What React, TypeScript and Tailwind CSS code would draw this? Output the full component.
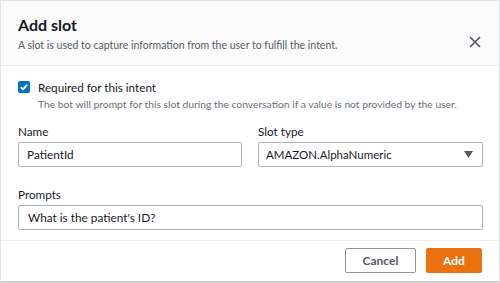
import React, { useState } from "react";

export default function App() {
  const [required, setRequired] = useState(true);
  const [name, setName] = useState("PatientId");
  const [prompt, setPrompt] = useState("What is the patient's ID?");

  return (
    <div
      className="w-[500px] h-[283px] bg-white"
      style={{ fontFamily: 'Lato, "Noto Sans", sans-serif' }}
    >
      <div className="flex flex-col h-[282px] border border-[#e1e4e4] border-b-[#c8cbcc] shadow-[0_1px_1px_rgba(0,0,0,0.15)]">
        {/* header */}
        <div className="flex justify-between bg-[#fbfbfb] border-b border-[#eaeded] h-[65px] pl-[17px] pr-[18px] pt-[13px]">
          <div className="flex flex-col">
            <h2 className="text-[16px] font-bold leading-[22px] text-[#16191f]">Add slot</h2>
            <p className="text-[10.5px] leading-[16px] text-[#545b64] mt-[1px] whitespace-nowrap">
              A slot is used to capture information from the user to fulfill the intent.
            </p>
          </div>
          <button className="mt-[5px] text-[#545b64]">
            <svg width="12" height="12" viewBox="0 0 12 12">
              <path d="M1 1 L11 11 M11 1 L1 11" stroke="#545b64" strokeWidth="1.7" />
            </svg>
          </button>
        </div>

        {/* body */}
        <div className="flex flex-col flex-1 px-[17px] pt-[13px]">
          <label className="flex gap-[8px] cursor-pointer">
            <span
              onClick={() => setRequired(!required)}
              className={`mt-[2px] w-[12px] h-[12px] rounded-[2px] flex items-center justify-center ${
                required ? "bg-[#0073bb]" : "border border-[#aab7b8] bg-white"
              }`}
            >
              {required && (
                <svg width="10" height="10" viewBox="0 0 10 10">
                  <path d="M1.8 5.2 L4 7.4 L8.3 2.6" stroke="white" strokeWidth="1.8" fill="none" />
                </svg>
              )}
            </span>
            <div className="flex flex-col">
              <span className="text-[11.7px] leading-[16px] text-[#16191f]">Required for this intent</span>
              <span className="text-[10.3px] leading-[16px] text-[#687078] mt-[1px] whitespace-nowrap">
                The bot will prompt for this slot during the conversation if a value is not provided by the user.
              </span>
            </div>
          </label>

          <div className="grid grid-cols-2 gap-x-[16px] mt-[11px]">
            <div className="flex flex-col">
              <span className="text-[11.7px] leading-[16px] text-[#16191f]">Name</span>
              <input
                value={name}
                onChange={(e) => setName(e.target.value)}
                className="mt-[3px] h-[25px] w-[224px] border border-[#aab7b8] rounded-[2px] px-[8px] text-[11.8px] text-[#16191f] outline-none"
              />
            </div>
            <div className="flex flex-col">
              <span className="text-[11.7px] leading-[16px] text-[#16191f]">Slot type</span>
              <div className="mt-[3px] h-[25px] w-[225px] border border-[#aab7b8] rounded-[2px] pl-[7px] pr-[9px] flex items-center justify-between">
                <span className="text-[11.5px] text-[#16191f]">AMAZON.AlphaNumeric</span>
                <svg width="9" height="7" viewBox="0 0 9 7">
                  <path d="M0 0 H9 L4.5 7 Z" fill="#545b64" />
                </svg>
              </div>
            </div>
          </div>

          <span className="text-[11.7px] leading-[16px] text-[#16191f] mt-[19px]">Prompts</span>
          <input
            value={prompt}
            onChange={(e) => setPrompt(e.target.value)}
            className="mt-[3px] h-[25px] w-[465px] border border-[#aab7b8] rounded-[2px] px-[9px] text-[11.8px] text-[#16191f] outline-none"
          />
        </div>

        {/* footer */}
        <div className="flex justify-end gap-[10px] border-t border-[#eaeded] h-[41px] pt-[7px] pr-[17px]">
          <button className="w-[71px] h-[25px] border border-[#8d9696] rounded-[2px] bg-white text-[12px] font-bold text-[#545b64]">
            Cancel
          </button>
          <button className="w-[56px] h-[25px] rounded-[2px] bg-[#ec7211] border border-[#ec7211] text-[12px] font-bold text-white">
            Add
          </button>
        </div>
      </div>
    </div>
  );
}
